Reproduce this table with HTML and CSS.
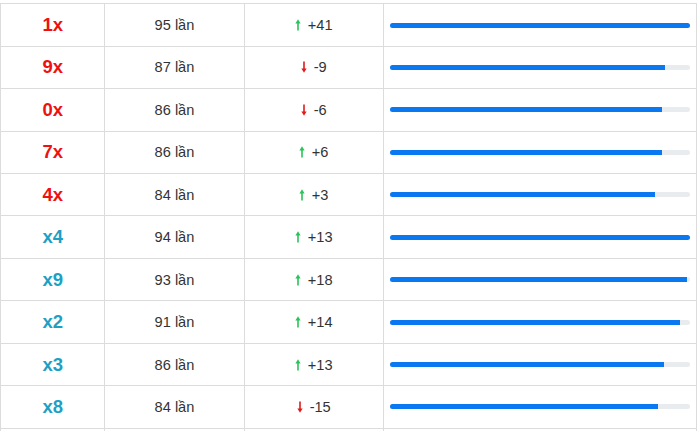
FILE: index.html
```html
<!DOCTYPE html>
<html lang="vi">
<head>
<meta charset="utf-8">
<link rel="stylesheet" href="styles.css">
</head>
<body>
<table class="stats">
  <colgroup>
    <col class="c-num"><col class="c-count"><col class="c-delta"><col class="c-bar">
  </colgroup>
  <tbody>
    <tr><td class="num head">1x</td><td class="count">95 lần</td><td class="delta"><span class="up"><svg viewBox="0 0 6 12" width="6" height="12"><path d="M3 11.5V3.5"/><path class="hd" d="M0.4 4.6L3 0.3L5.6 4.6Z"/></svg></span>+41</td><td class="bar"><div class="track"><div class="fill" style="width:100%"></div></div></td></tr>
    <tr><td class="num head">9x</td><td class="count">87 lần</td><td class="delta"><span class="down"><svg viewBox="0 0 6 12" width="6" height="12"><path d="M3 0.5V8.5"/><path class="hd" d="M0.4 7.4L3 11.7L5.6 7.4Z"/></svg></span>-9</td><td class="bar"><div class="track"><div class="fill" style="width:91.58%"></div></div></td></tr>
    <tr><td class="num head">0x</td><td class="count">86 lần</td><td class="delta"><span class="down"><svg viewBox="0 0 6 12" width="6" height="12"><path d="M3 0.5V8.5"/><path class="hd" d="M0.4 7.4L3 11.7L5.6 7.4Z"/></svg></span>-6</td><td class="bar"><div class="track"><div class="fill" style="width:90.53%"></div></div></td></tr>
    <tr><td class="num head">7x</td><td class="count">86 lần</td><td class="delta"><span class="up"><svg viewBox="0 0 6 12" width="6" height="12"><path d="M3 11.5V3.5"/><path class="hd" d="M0.4 4.6L3 0.3L5.6 4.6Z"/></svg></span>+6</td><td class="bar"><div class="track"><div class="fill" style="width:90.53%"></div></div></td></tr>
    <tr><td class="num head">4x</td><td class="count">84 lần</td><td class="delta"><span class="up"><svg viewBox="0 0 6 12" width="6" height="12"><path d="M3 11.5V3.5"/><path class="hd" d="M0.4 4.6L3 0.3L5.6 4.6Z"/></svg></span>+3</td><td class="bar"><div class="track"><div class="fill" style="width:88.42%"></div></div></td></tr>
    <tr><td class="num tail">x4</td><td class="count">94 lần</td><td class="delta"><span class="up"><svg viewBox="0 0 6 12" width="6" height="12"><path d="M3 11.5V3.5"/><path class="hd" d="M0.4 4.6L3 0.3L5.6 4.6Z"/></svg></span>+13</td><td class="bar"><div class="track"><div class="fill" style="width:100%"></div></div></td></tr>
    <tr><td class="num tail">x9</td><td class="count">93 lần</td><td class="delta"><span class="up"><svg viewBox="0 0 6 12" width="6" height="12"><path d="M3 11.5V3.5"/><path class="hd" d="M0.4 4.6L3 0.3L5.6 4.6Z"/></svg></span>+18</td><td class="bar"><div class="track"><div class="fill" style="width:98.94%"></div></div></td></tr>
    <tr><td class="num tail">x2</td><td class="count">91 lần</td><td class="delta"><span class="up"><svg viewBox="0 0 6 12" width="6" height="12"><path d="M3 11.5V3.5"/><path class="hd" d="M0.4 4.6L3 0.3L5.6 4.6Z"/></svg></span>+14</td><td class="bar"><div class="track"><div class="fill" style="width:96.81%"></div></div></td></tr>
    <tr><td class="num tail">x3</td><td class="count">86 lần</td><td class="delta"><span class="up"><svg viewBox="0 0 6 12" width="6" height="12"><path d="M3 11.5V3.5"/><path class="hd" d="M0.4 4.6L3 0.3L5.6 4.6Z"/></svg></span>+13</td><td class="bar"><div class="track"><div class="fill" style="width:91.49%"></div></div></td></tr>
    <tr><td class="num tail">x8</td><td class="count">84 lần</td><td class="delta"><span class="down"><svg viewBox="0 0 6 12" width="6" height="12"><path d="M3 0.5V8.5"/><path class="hd" d="M0.4 7.4L3 11.7L5.6 7.4Z"/></svg></span>-15</td><td class="bar"><div class="track"><div class="fill" style="width:89.36%"></div></div></td></tr>
    <tr><td class="num tail">&nbsp;</td><td class="count"></td><td class="delta"></td><td class="bar"></td></tr>
  </tbody>
</table>
</body>
</html>
```
FILE: styles.css
```css
html, body {
  margin: 0;
  padding: 0;
  background: #fff;
}
html { overflow: hidden; }
body {
  padding-top: 3.3px;
  font-family: "Liberation Sans", Arial, sans-serif;
  color: #333;
}
.stats {
  width: 697px;
  border-collapse: collapse;
  table-layout: fixed;
}
.c-num { width: 15%; }
.c-count { width: 20%; }
.c-delta { width: 20%; }
.c-bar { width: 45%; }
.stats td {
  border: 1px solid #dcdcdc;
  height: 42.44px;
  padding: 0 6px;
  text-align: center;
  vertical-align: middle;
  font-size: 14.6px;
  box-sizing: border-box;
}
.stats td.num {
  font-size: 18.5px;
  font-weight: bold;
}
.num.head { color: #ee1111; }
.num.tail { color: #1e9fc4; }
.delta span {
  display: inline-block;
  margin-right: 7px;
  vertical-align: -1px;
}
.delta svg { display: block; }
.delta svg path {
  stroke-width: 1.6;
  fill: none;
}
.delta svg path.hd { stroke: none; }
.up svg path { stroke: #2bc25a; }
.up svg path.hd { fill: #2bc25a; }
.down svg path { stroke: #e01b1b; }
.down svg path.hd { fill: #e01b1b; }
.stats td.bar { text-align: left; }
.track {
  height: 5px;
  background: #e9ecef;
  border-radius: 3px;
  overflow: hidden;
}
.fill {
  height: 100%;
  background: #0a78f0;
}
```
